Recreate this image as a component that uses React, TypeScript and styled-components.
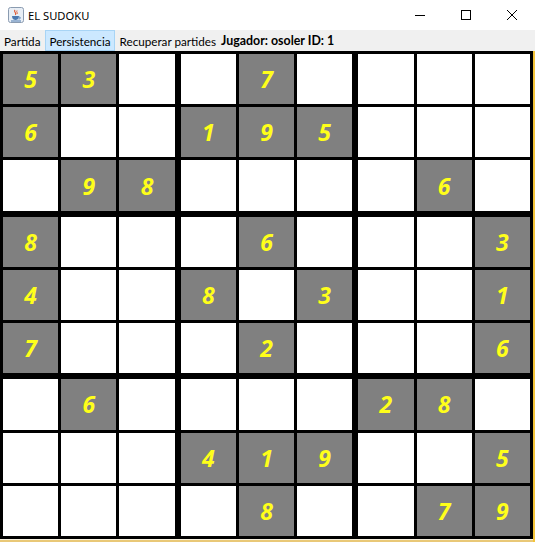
import React from "react";
import styled, { createGlobalStyle } from "styled-components";

const Global = createGlobalStyle`
  html, body { margin: 0; padding: 0; background: #ffffff; }
  body { width: 535px; height: 543px; overflow: hidden; }
`;

const Window = styled.div`
  width: 535px;
  height: 543px;
  display: flex;
  flex-direction: column;
  background: #ffffff;
  font-family: "Lato", "Noto Sans", sans-serif;
`;

const TitleBar = styled.div`
  height: 30px;
  display: flex;
  align-items: center;
  background: #ffffff;
  flex-shrink: 0;
`;

const TitleIcon = styled.div`
  width: 16px;
  height: 16px;
  margin-left: 8px;
  display: flex;
`;

const TitleText = styled.div`
  margin-left: 4px;
  font-family: "Noto Sans", "Open Sans", sans-serif;
  font-size: 11.2px;
  color: #000;
`;

const Controls = styled.div`
  margin-left: auto;
  display: flex;
  height: 30px;
`;

const ControlButton = styled.div`
  width: 46px;
  height: 30px;
  display: flex;
  align-items: center;
  justify-content: center;
`;

const MenuBar = styled.div`
  height: 21px;
  display: flex;
  align-items: stretch;
  background: #f0f0f0;
  flex-shrink: 0;
`;

const MenuItem = styled.div<{ $active?: boolean }>`
  display: flex;
  align-items: center;
  padding: 0 4px;
  margin-right: 1px;
  font-size: 11.7px;
  color: #000;
  background: ${(p) => (p.$active ? "#cce8ff" : "transparent")};
  box-shadow: ${(p) => (p.$active ? "inset 0 0 0 1px #a8d4f5" : "none")};
  white-space: nowrap;
`;

const PlayerLabel = styled.div`
  display: flex;
  align-items: center;
  padding-left: 0;
  font-size: 12.4px;
  font-weight: 700;
  color: #000;
  white-space: nowrap;
`;

const Content = styled.div`
  height: 491px;
  display: flex;
  align-items: flex-start;
  background: #e9c877;
  border-right: 2px solid #f3c43a;
  box-sizing: border-box;
`;

const Board = styled.div`
  width: 533px;
  height: 488px;
  display: grid;
  grid-template-columns: repeat(3, 1fr);
  grid-template-rows: repeat(3, 1fr);
  background: #000;
  border-bottom: 1px solid #f6f0e0;
`;

const Block = styled.div`
  display: grid;
  grid-template-columns: repeat(3, 1fr);
  grid-template-rows: repeat(3, 1fr);
  gap: 3px;
  padding: 3px;
  background: #000;
  min-width: 0;
  min-height: 0;
`;

const Cell = styled.div<{ $given: boolean }>`
  background: ${(p) => (p.$given ? "#808080" : "#ffffff")};
  display: flex;
  align-items: center;
  justify-content: center;
  font-family: "Open Sans", "Noto Sans", sans-serif;
  font-weight: 700;
  font-style: italic;
  font-size: 23px;
  color: #ffff1a;
  min-width: 0;
  min-height: 0;
`;

const puzzle = [
  "53..7....",
  "6..195...",
  ".98....6.",
  "8...6...3",
  "4..8.3..1",
  "7...2...6",
  ".6....28.",
  "...419..5",
  "....8..79",
];

const JavaIcon = () => (
  <svg width="16" height="16" viewBox="0 0 16 16">
    <rect x="0.5" y="0.5" width="15" height="15" rx="2" fill="#e8eef5" stroke="#8a9bb0" />
    <path d="M7 3 C5 5 9 5 7.5 8" stroke="#e0522a" strokeWidth="1.1" fill="none" />
    <path d="M9 3.5 C8 5 10 5.5 9 7" stroke="#e0522a" strokeWidth="0.9" fill="none" />
    <path d="M4 9 H11 C11 12 9 13 7.5 13 C6 13 4 12 4 9 Z" fill="#4a78b0" />
    <path d="M11 10 C13 10 13 12 10.5 12" stroke="#4a78b0" strokeWidth="0.9" fill="none" />
    <rect x="3" y="13.5" width="10" height="1" fill="#4a78b0" />
  </svg>
);

export default function App() {
  const blocks = [];
  for (let b = 0; b < 9; b++) {
    const br = Math.floor(b / 3) * 3;
    const bc = (b % 3) * 3;
    const cells = [];
    for (let i = 0; i < 9; i++) {
      const r = br + Math.floor(i / 3);
      const c = bc + (i % 3);
      const ch = puzzle[r][c];
      const given = ch !== ".";
      cells.push(
        <Cell key={i} $given={given}>
          {given ? ch : ""}
        </Cell>
      );
    }
    blocks.push(<Block key={b}>{cells}</Block>);
  }
  return (
    <>
      <Global />
      <Window>
        <TitleBar>
          <TitleIcon>
            <JavaIcon />
          </TitleIcon>
          <TitleText>EL SUDOKU</TitleText>
          <Controls>
            <ControlButton>
              <svg width="10" height="10" viewBox="0 0 10 10">
                <rect x="0" y="5" width="10" height="1" fill="#000" />
              </svg>
            </ControlButton>
            <ControlButton>
              <svg width="10" height="10" viewBox="0 0 10 10">
                <rect x="0.5" y="0.5" width="9" height="9" fill="none" stroke="#000" />
              </svg>
            </ControlButton>
            <ControlButton>
              <svg width="10" height="10" viewBox="0 0 10 10">
                <path d="M0 0 L10 10 M10 0 L0 10" stroke="#000" strokeWidth="1" />
              </svg>
            </ControlButton>
          </Controls>
        </TitleBar>
        <MenuBar>
          <MenuItem>Partida</MenuItem>
          <MenuItem $active>Persistencia</MenuItem>
          <MenuItem>Recuperar partides</MenuItem>
          <PlayerLabel>Jugador: osoler ID: 1</PlayerLabel>
        </MenuBar>
        <Content>
          <Board>{blocks}</Board>
        </Content>
      </Window>
    </>
  );
}
